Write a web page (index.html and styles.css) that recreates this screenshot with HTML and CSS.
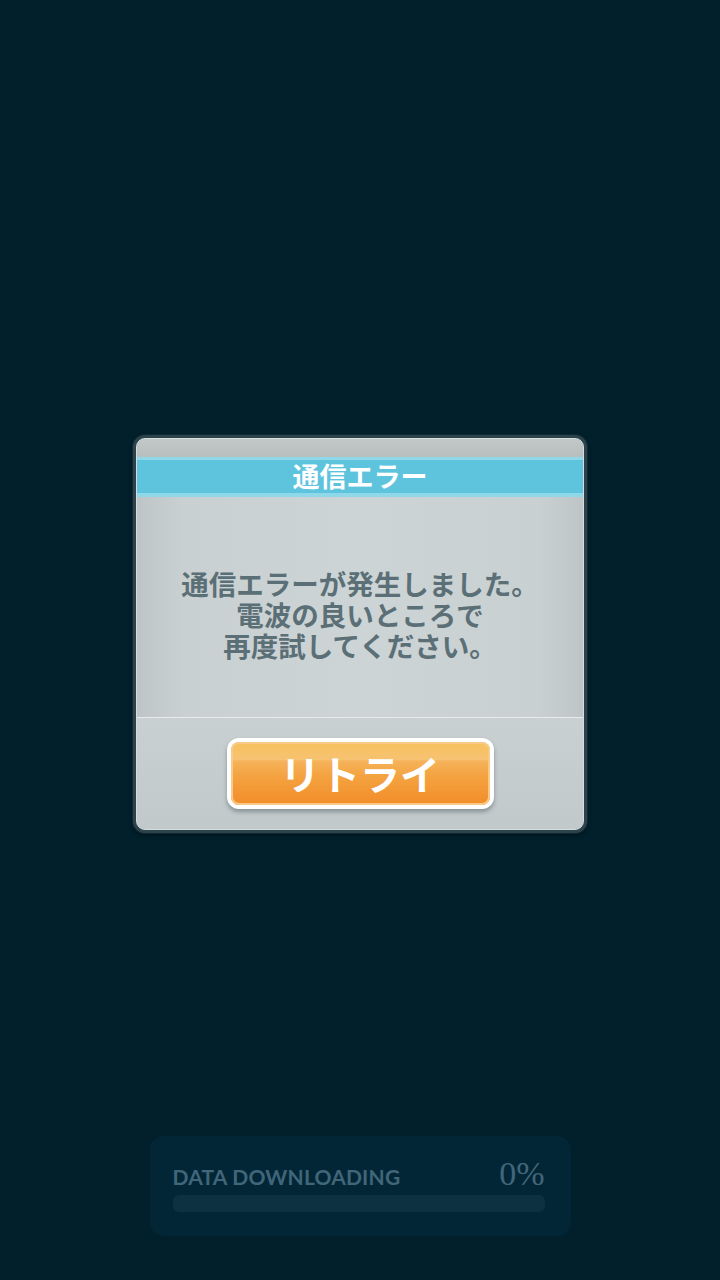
FILE: index.html
```html
<!doctype html>
<html>
<head>
<meta charset="utf-8">
<link rel="stylesheet" href="styles.css">
</head>
<body>
<div class="screen">
	<div class="dialog">
		<div class="dialog-inner">
			<div class="dialog-top"></div>
			<div class="dialog-title">通信エラー</div>
			<div class="dialog-body">
				<p class="msg">通信エラーが発生しました。<br>電波の良いところで<br>再度試してください。</p>
			</div>
			<div class="dialog-foot">
				<a href="javascript:;" class="btn-retry"><span>リトライ</span></a>
			</div>
		</div>
	</div>

	<div class="download">
		<div class="download-head">
			<span class="download-label">DATA DOWNLOADING</span>
			<span class="download-pct">0%</span>
		</div>
		<div class="download-bar"></div>
	</div>
</div>
</body>
</html>
```

FILE: styles.css
```css
*{
	margin:0; padding:0; box-sizing:border-box;
}
html,body{
	background:#01202c;
}
.screen{
	width:720px; height:1280px; padding-top:435px;
	display:flex; flex-direction:column; align-items:center;
}
.dialog{
	width:454px; height:398px; padding:3px;
	border-radius:12px; background:#2c434c;
	box-shadow:0 0 0 1px #0f2a34, 0 2px 4px rgba(0,0,0,.5);
}
	.dialog-inner{
		height:100%; border-radius:9px; overflow:hidden;
		display:flex; flex-direction:column;
		background:linear-gradient(90deg,#bec5c6 0%,#c9d0d1 10%,#cdd4d5 50%,#c9d0d1 90%,#bec5c6 100%);
		border:1px solid #d6dcdc;
	}
	.dialog-top{
		height:18px; background:linear-gradient(#c2c8c8,#b7bebe);
	}
	.dialog-title{
		height:40px; background:#5ec4de;
		border-top:3px solid #8fd8ea; border-bottom:4px solid #8fd8ea;
		text-align:center; color:#fff;
		font:bold 27px/32px "Noto Sans CJK JP", sans-serif;
	}
	.dialog-body{
		height:221px; display:flex; align-items:center; justify-content:center;
		border-bottom:1px solid #e6ecec;
	}
		.msg{
			text-align:center; color:#5b6f77; margin-top:14px;
			font:bold 27.5px/31px "Noto Sans CJK JP", sans-serif;
		}
	.dialog-foot{
		flex:1; display:flex; justify-content:center; padding-top:20px;
		background:linear-gradient(#c9d0d1,#c2c9ca);
	}
	.btn-retry{
		width:267px; height:71px; padding:4px;
		background:#fff; border-radius:12px; text-decoration:none;
		box-shadow:0 3px 4px rgba(60,80,90,.45);
		display:block;
	}
		.btn-retry span{
			display:block; height:100%; border-radius:8px;
			background:linear-gradient(#f6c25c 0%,#f7c272 28%,#f5b35a 30%,#f4a240 55%,#f28d2a 100%);
			box-shadow:inset 0 0 0 2px #f9c98a;
			text-align:center; color:#fff;
			font:bold 40px/62px "Noto Sans CJK JP", sans-serif;
		}
.download{
	width:421px; height:100px; margin-top:303px;
	background:#032637; border-radius:14px;
	padding:19px 26px 0 23px;
}
	.download-head{
		display:flex; justify-content:space-between; align-items:baseline;
		color:#40667a; height:40px;
	}
	.download-label{
		font:bold 21px/38px Lato, sans-serif; letter-spacing:0.2px;
	}
	.download-pct{
		font:34px/38px "Liberation Serif", serif;
	}
	.download-bar{
		height:17px; border-radius:6px;
		background:#0d3141;
	}
```
